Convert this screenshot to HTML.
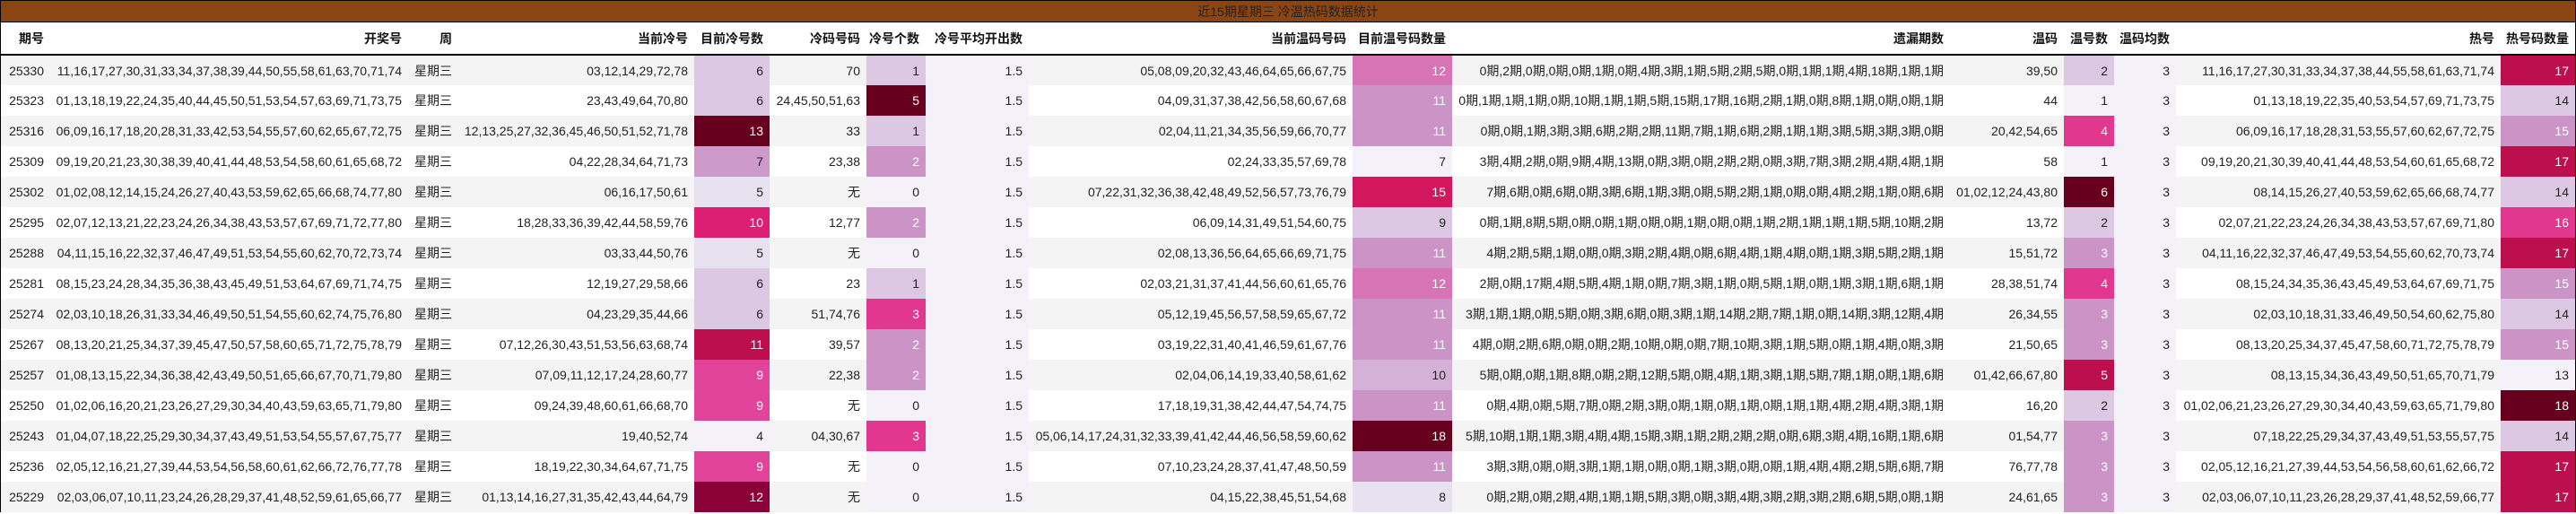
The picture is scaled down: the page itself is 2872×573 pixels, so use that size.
<!DOCTYPE html>
<html><head><meta charset="utf-8">
<style>
*{margin:0;padding:0;box-sizing:border-box}
html,body{width:2872px;height:573px;background:#fff;overflow:hidden}
body{font-family:"Liberation Sans","Noto Sans CJK SC",sans-serif;font-size:14px;color:#222}
.wrap{width:2872px;border:1px solid #000;border-bottom:none}
.title{height:24px;background:#8B4513;text-align:center;line-height:24px;color:#222;font-size:14px;border-bottom:1px solid #000}
table{border-collapse:collapse;table-layout:fixed;width:2870px}
th{height:36px;font-weight:bold;color:#111;text-align:right;padding-right:7px;border-bottom:2px solid #000;white-space:nowrap}
td{height:34px;text-align:right;padding-right:7px;white-space:nowrap;overflow:visible}
tbody tr:nth-child(odd) td{background:#f4f4f4}
tbody tr:nth-child(even) td{background:#fff}
tbody tr td.lv{background:#f4f2f8}
tbody tr td.a{background:#f4f2f8;color:#222}
tbody tr td.b{background:#e8e1ef;color:#222}
tbody tr td.c{background:#dcc8e2;color:#222}
tbody tr td.c2{background:#d4b2d8;color:#222}
tbody tr td.d{background:#cc93c6;color:#fff}
tbody tr td.d7{background:#cc9bcb;color:#222}
tbody tr td.e{background:#d674b6;color:#fff}
tbody tr td.f{background:#e2449c;color:#fff}
tbody tr td.g{background:#e2378f;color:#fff}
tbody tr td.h{background:#dc1f72;color:#fff}
tbody tr td.i{background:#d2175f;color:#fff}
tbody tr td.j{background:#bd0e4d;color:#fff}
tbody tr td.k{background:#8c0038;color:#fff}
tbody tr td.l{background:#67001f;color:#fff}
</style></head><body>
<div class="wrap">
<div class="title">近15期星期三 冷温热码数据统计</div>
<table>
<colgroup>
<col style="width:55px"><col style="width:399px"><col style="width:56px"><col style="width:263px"><col style="width:84px"><col style="width:108px"><col style="width:66px"><col style="width:115px"><col style="width:361px"><col style="width:111px"><col style="width:555px"><col style="width:127px"><col style="width:56px"><col style="width:69px"><col style="width:362px"><col style="width:83px">
</colgroup>
<thead><tr><th>期号</th><th>开奖号</th><th>周</th><th>当前冷号</th><th>目前冷号数</th><th>冷码号码</th><th>冷号个数</th><th>冷号平均开出数</th><th>当前温码号码</th><th>目前温号码数量</th><th>遗漏期数</th><th>温码</th><th>温号数</th><th>温码均数</th><th>热号</th><th>热号码数量</th></tr></thead>
<tbody>
<tr><td>25330</td><td>11,16,17,27,30,31,33,34,37,38,39,44,50,55,58,61,63,70,71,74</td><td>星期三</td><td>03,12,14,29,72,78</td><td class="c">6</td><td>70</td><td class="c">1</td><td class="lv">1.5</td><td>05,08,09,20,32,43,46,64,65,66,67,75</td><td class="e">12</td><td>0期,2期,0期,0期,0期,1期,0期,4期,3期,1期,5期,2期,5期,0期,1期,1期,4期,18期,1期,1期</td><td>39,50</td><td class="c">2</td><td class="lv">3</td><td>11,16,17,27,30,31,33,34,37,38,44,55,58,61,63,71,74</td><td class="j">17</td></tr>
<tr><td>25323</td><td>01,13,18,19,22,24,35,40,44,45,50,51,53,54,57,63,69,71,73,75</td><td>星期三</td><td>23,43,49,64,70,80</td><td class="c">6</td><td>24,45,50,51,63</td><td class="l">5</td><td class="lv">1.5</td><td>04,09,31,37,38,42,56,58,60,67,68</td><td class="d">11</td><td>0期,1期,1期,1期,0期,10期,1期,1期,5期,15期,17期,16期,2期,1期,0期,8期,1期,0期,0期,1期</td><td>44</td><td class="a">1</td><td class="lv">3</td><td>01,13,18,19,22,35,40,53,54,57,69,71,73,75</td><td class="c">14</td></tr>
<tr><td>25316</td><td>06,09,16,17,18,20,28,31,33,42,53,54,55,57,60,62,65,67,72,75</td><td>星期三</td><td>12,13,25,27,32,36,45,46,50,51,52,71,78</td><td class="l">13</td><td>33</td><td class="c">1</td><td class="lv">1.5</td><td>02,04,11,21,34,35,56,59,66,70,77</td><td class="d">11</td><td>0期,0期,1期,3期,3期,6期,2期,2期,11期,7期,1期,6期,2期,1期,1期,3期,5期,3期,3期,0期</td><td>20,42,54,65</td><td class="g">4</td><td class="lv">3</td><td>06,09,16,17,18,28,31,53,55,57,60,62,67,72,75</td><td class="d">15</td></tr>
<tr><td>25309</td><td>09,19,20,21,23,30,38,39,40,41,44,48,53,54,58,60,61,65,68,72</td><td>星期三</td><td>04,22,28,34,64,71,73</td><td class="d7">7</td><td>23,38</td><td class="d">2</td><td class="lv">1.5</td><td>02,24,33,35,57,69,78</td><td class="a">7</td><td>3期,4期,2期,0期,9期,4期,13期,0期,3期,0期,2期,2期,0期,3期,7期,3期,2期,4期,4期,1期</td><td>58</td><td class="a">1</td><td class="lv">3</td><td>09,19,20,21,30,39,40,41,44,48,53,54,60,61,65,68,72</td><td class="j">17</td></tr>
<tr><td>25302</td><td>01,02,08,12,14,15,24,26,27,40,43,53,59,62,65,66,68,74,77,80</td><td>星期三</td><td>06,16,17,50,61</td><td class="b">5</td><td>无</td><td class="a">0</td><td class="lv">1.5</td><td>07,22,31,32,36,38,42,48,49,52,56,57,73,76,79</td><td class="i">15</td><td>7期,6期,0期,6期,0期,3期,6期,1期,3期,0期,5期,2期,1期,0期,0期,4期,2期,1期,0期,6期</td><td>01,02,12,24,43,80</td><td class="l">6</td><td class="lv">3</td><td>08,14,15,26,27,40,53,59,62,65,66,68,74,77</td><td class="c">14</td></tr>
<tr><td>25295</td><td>02,07,12,13,21,22,23,24,26,34,38,43,53,57,67,69,71,72,77,80</td><td>星期三</td><td>18,28,33,36,39,42,44,58,59,76</td><td class="h">10</td><td>12,77</td><td class="d">2</td><td class="lv">1.5</td><td>06,09,14,31,49,51,54,60,75</td><td class="c">9</td><td>0期,1期,8期,5期,0期,0期,1期,0期,0期,1期,0期,0期,1期,2期,1期,1期,1期,5期,10期,2期</td><td>13,72</td><td class="c">2</td><td class="lv">3</td><td>02,07,21,22,23,24,26,34,38,43,53,57,67,69,71,80</td><td class="g">16</td></tr>
<tr><td>25288</td><td>04,11,15,16,22,32,37,46,47,49,51,53,54,55,60,62,70,72,73,74</td><td>星期三</td><td>03,33,44,50,76</td><td class="b">5</td><td>无</td><td class="a">0</td><td class="lv">1.5</td><td>02,08,13,36,56,64,65,66,69,71,75</td><td class="d">11</td><td>4期,2期,5期,1期,0期,0期,3期,2期,4期,0期,6期,4期,1期,4期,0期,1期,3期,5期,2期,1期</td><td>15,51,72</td><td class="d">3</td><td class="lv">3</td><td>04,11,16,22,32,37,46,47,49,53,54,55,60,62,70,73,74</td><td class="j">17</td></tr>
<tr><td>25281</td><td>08,15,23,24,28,34,35,36,38,43,45,49,51,53,64,67,69,71,74,75</td><td>星期三</td><td>12,19,27,29,58,66</td><td class="c">6</td><td>23</td><td class="c">1</td><td class="lv">1.5</td><td>02,03,21,31,37,41,44,56,60,61,65,76</td><td class="e">12</td><td>2期,0期,17期,4期,5期,4期,1期,0期,7期,3期,1期,0期,5期,1期,0期,1期,3期,1期,6期,1期</td><td>28,38,51,74</td><td class="g">4</td><td class="lv">3</td><td>08,15,24,34,35,36,43,45,49,53,64,67,69,71,75</td><td class="d">15</td></tr>
<tr><td>25274</td><td>02,03,10,18,26,31,33,34,46,49,50,51,54,55,60,62,74,75,76,80</td><td>星期三</td><td>04,23,29,35,44,66</td><td class="c">6</td><td>51,74,76</td><td class="g">3</td><td class="lv">1.5</td><td>05,12,19,45,56,57,58,59,65,67,72</td><td class="d">11</td><td>3期,1期,1期,0期,5期,0期,3期,6期,0期,3期,1期,14期,2期,7期,1期,0期,14期,3期,12期,4期</td><td>26,34,55</td><td class="d">3</td><td class="lv">3</td><td>02,03,10,18,31,33,46,49,50,54,60,62,75,80</td><td class="c">14</td></tr>
<tr><td>25267</td><td>08,13,20,21,25,34,37,39,45,47,50,57,58,60,65,71,72,75,78,79</td><td>星期三</td><td>07,12,26,30,43,51,53,56,63,68,74</td><td class="j">11</td><td>39,57</td><td class="d">2</td><td class="lv">1.5</td><td>03,19,22,31,40,41,46,59,61,67,76</td><td class="d">11</td><td>4期,0期,2期,6期,0期,0期,2期,10期,0期,0期,7期,10期,3期,1期,5期,0期,1期,4期,0期,3期</td><td>21,50,65</td><td class="d">3</td><td class="lv">3</td><td>08,13,20,25,34,37,45,47,58,60,71,72,75,78,79</td><td class="d">15</td></tr>
<tr><td>25257</td><td>01,08,13,15,22,34,36,38,42,43,49,50,51,65,66,67,70,71,79,80</td><td>星期三</td><td>07,09,11,12,17,24,28,60,77</td><td class="f">9</td><td>22,38</td><td class="d">2</td><td class="lv">1.5</td><td>02,04,06,14,19,33,40,58,61,62</td><td class="c2">10</td><td>5期,0期,0期,1期,8期,0期,2期,12期,5期,0期,4期,1期,3期,1期,5期,7期,1期,0期,1期,6期</td><td>01,42,66,67,80</td><td class="j">5</td><td class="lv">3</td><td>08,13,15,34,36,43,49,50,51,65,70,71,79</td><td class="a">13</td></tr>
<tr><td>25250</td><td>01,02,06,16,20,21,23,26,27,29,30,34,40,43,59,63,65,71,79,80</td><td>星期三</td><td>09,24,39,48,60,61,66,68,70</td><td class="f">9</td><td>无</td><td class="a">0</td><td class="lv">1.5</td><td>17,18,19,31,38,42,44,47,54,74,75</td><td class="d">11</td><td>0期,4期,0期,5期,7期,0期,2期,3期,0期,1期,0期,1期,0期,1期,1期,4期,2期,4期,3期,1期</td><td>16,20</td><td class="c">2</td><td class="lv">3</td><td>01,02,06,21,23,26,27,29,30,34,40,43,59,63,65,71,79,80</td><td class="l">18</td></tr>
<tr><td>25243</td><td>01,04,07,18,22,25,29,30,34,37,43,49,51,53,54,55,57,67,75,77</td><td>星期三</td><td>19,40,52,74</td><td class="a">4</td><td>04,30,67</td><td class="g">3</td><td class="lv">1.5</td><td>05,06,14,17,24,31,32,33,39,41,42,44,46,56,58,59,60,62</td><td class="l">18</td><td>5期,10期,1期,1期,3期,4期,4期,15期,3期,1期,2期,2期,2期,0期,6期,3期,4期,16期,1期,6期</td><td>01,54,77</td><td class="d">3</td><td class="lv">3</td><td>07,18,22,25,29,34,37,43,49,51,53,55,57,75</td><td class="c">14</td></tr>
<tr><td>25236</td><td>02,05,12,16,21,27,39,44,53,54,56,58,60,61,62,66,72,76,77,78</td><td>星期三</td><td>18,19,22,30,34,64,67,71,75</td><td class="f">9</td><td>无</td><td class="a">0</td><td class="lv">1.5</td><td>07,10,23,24,28,37,41,47,48,50,59</td><td class="d">11</td><td>3期,3期,0期,0期,3期,1期,1期,0期,0期,1期,3期,0期,0期,1期,4期,4期,2期,5期,6期,7期</td><td>76,77,78</td><td class="d">3</td><td class="lv">3</td><td>02,05,12,16,21,27,39,44,53,54,56,58,60,61,62,66,72</td><td class="j">17</td></tr>
<tr><td>25229</td><td>02,03,06,07,10,11,23,24,26,28,29,37,41,48,52,59,61,65,66,77</td><td>星期三</td><td>01,13,14,16,27,31,35,42,43,44,64,79</td><td class="k">12</td><td>无</td><td class="a">0</td><td class="lv">1.5</td><td>04,15,22,38,45,51,54,68</td><td class="b">8</td><td>0期,2期,0期,2期,4期,1期,1期,5期,3期,0期,3期,4期,3期,2期,3期,2期,6期,5期,0期,1期</td><td>24,61,65</td><td class="d">3</td><td class="lv">3</td><td>02,03,06,07,10,11,23,26,28,29,37,41,48,52,59,66,77</td><td class="j">17</td></tr>
</tbody>
</table>
</div>
</body></html>
